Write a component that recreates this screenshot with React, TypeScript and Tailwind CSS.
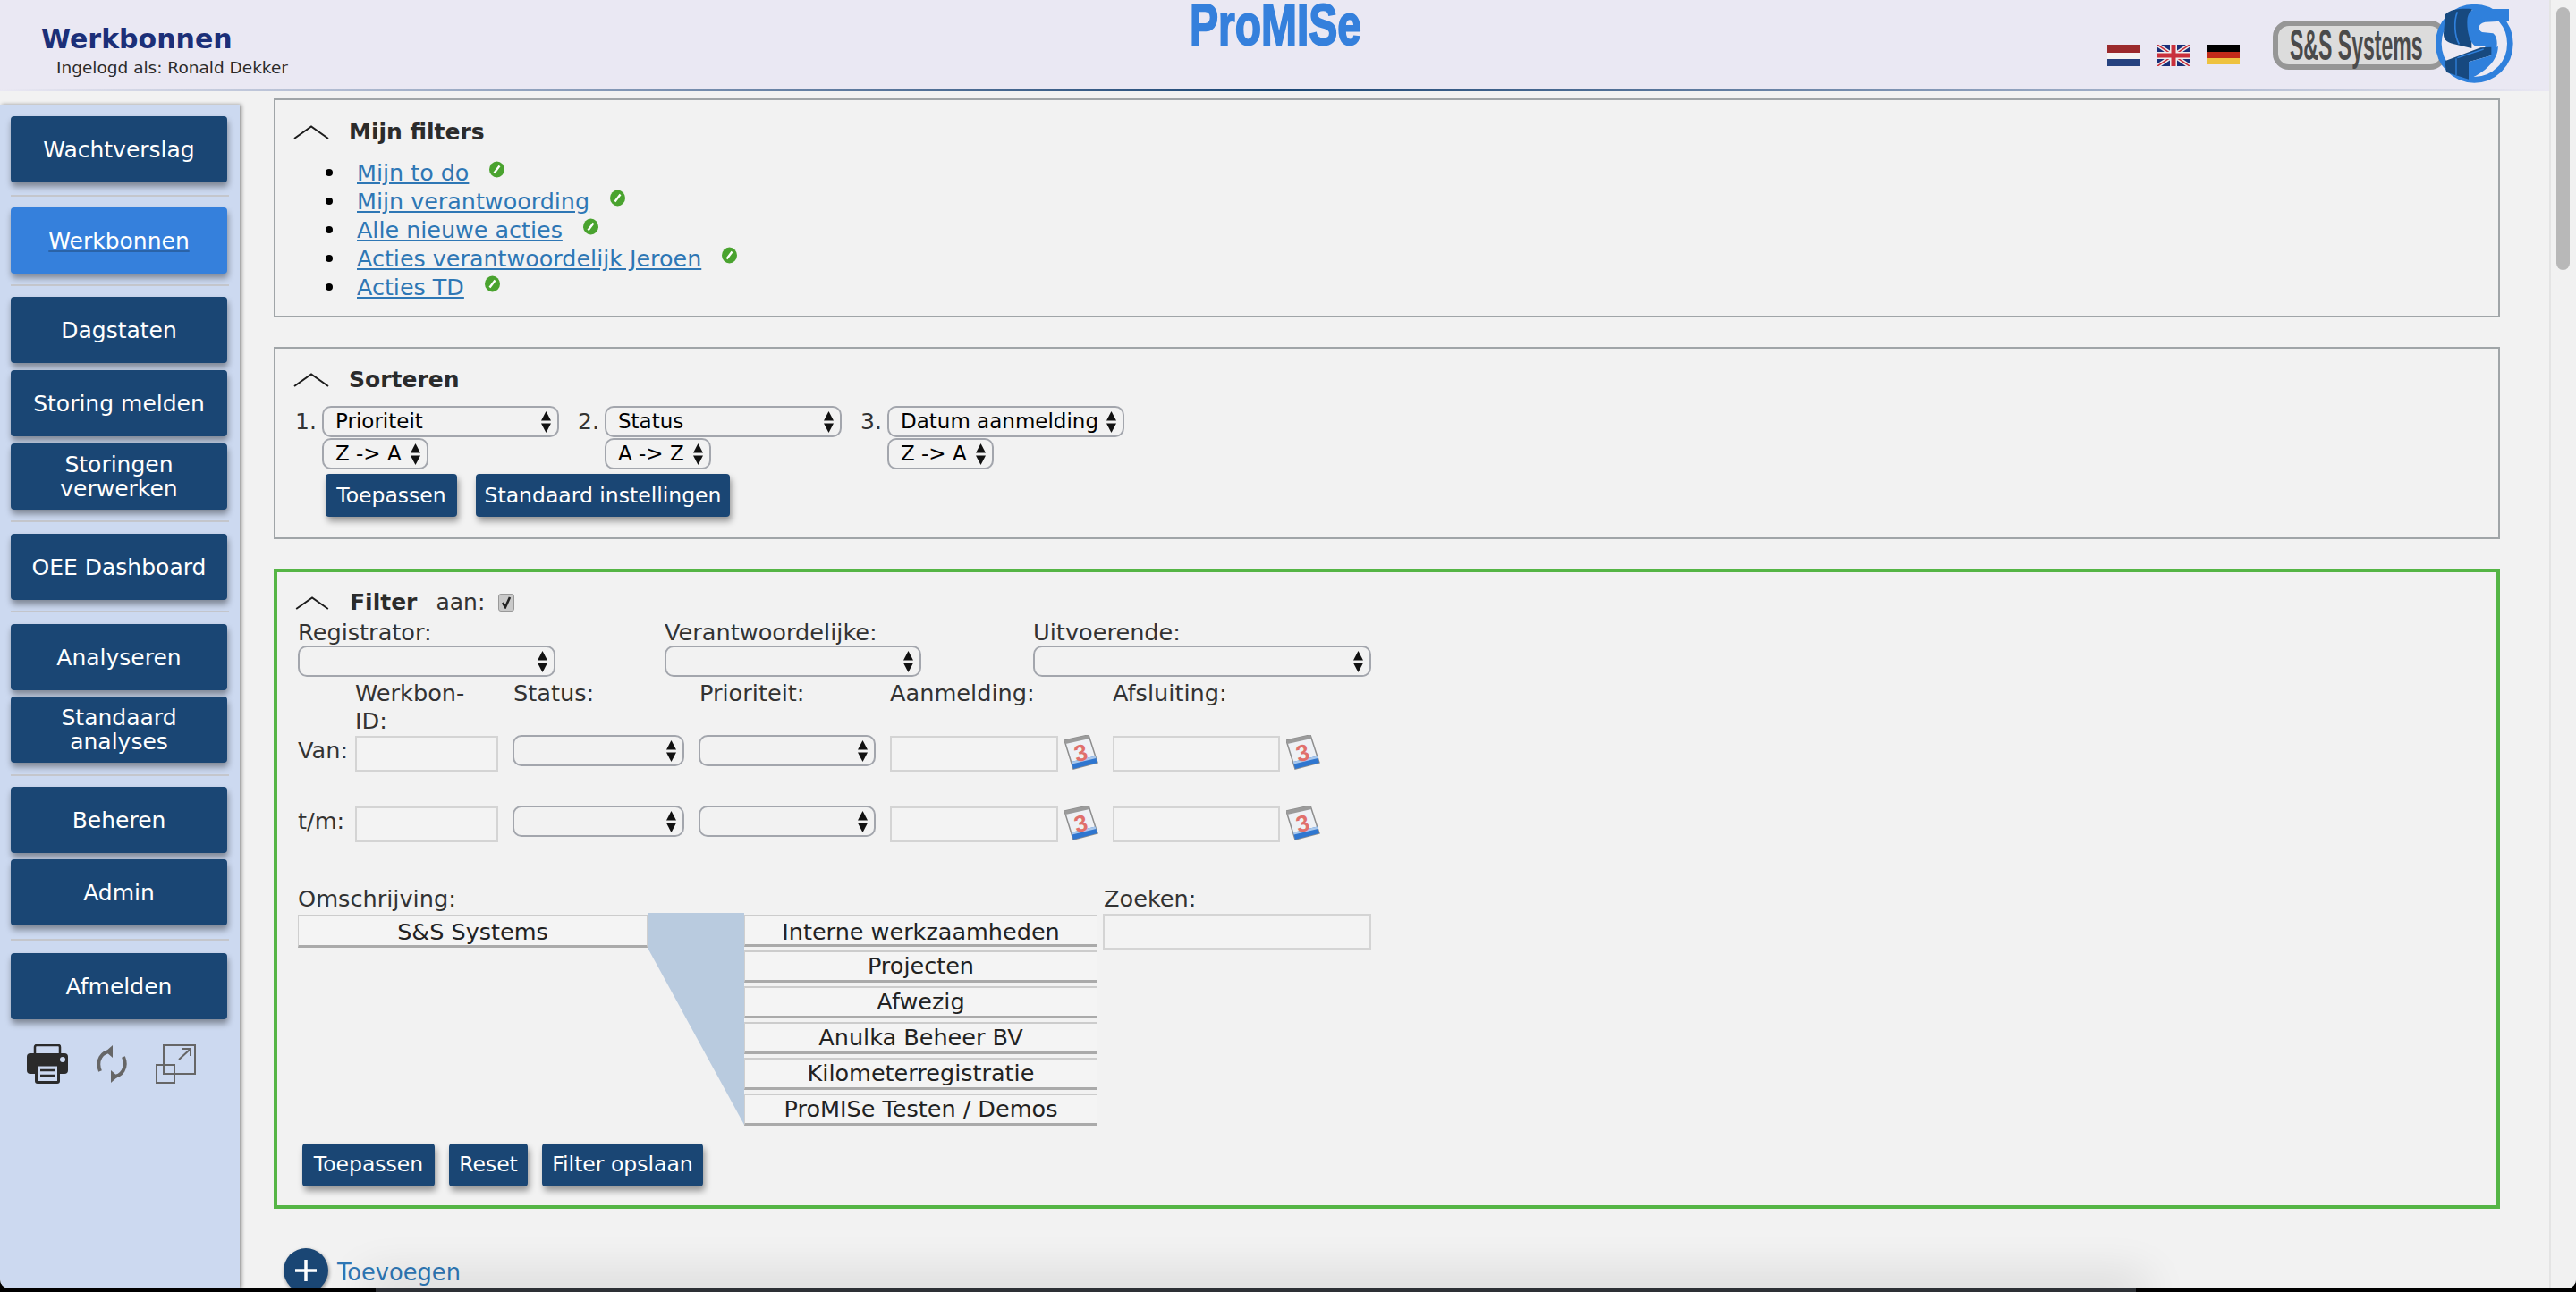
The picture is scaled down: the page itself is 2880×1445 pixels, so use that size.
const font = "font-['DejaVu_Sans',sans-serif]";

const menuGroups = [
  { items: ["Wachtverslag"], gap: "gap-[7px]", after: "mt-[14px] mb-3" },
  { items: ["Werkbonnen"], gap: "gap-[7px]", active: true, after: "mt-3 mb-[12px]" },
  { items: ["Dagstaten", "Storing melden", "Storingen verwerken"], gap: "gap-[8px]", after: "mt-3 mb-[13px]" },
  { items: ["OEE Dashboard"], gap: "gap-[7px]", after: "mt-3 mb-[13px]" },
  { items: ["Analyseren", "Standaard analyses"], gap: "gap-[7px]", after: "mt-[13px] mb-[12px]" },
  { items: ["Beheren", "Admin"], gap: "gap-[7px]", after: "mt-[15px] mb-[14px]" },
  { items: ["Afmelden"], gap: "gap-[7px]", after: "" },
];

const Chevron = ({ small = false }: { small?: boolean }) => (
  <svg viewBox="0 0 40 16" className={small ? "w-[38px] h-[15px]" : "w-[40px] h-[16px]"} fill="none" stroke="#1c1c1c" strokeWidth="2">
    <path d="M1 15 L20 1.5 L39 15" />
  </svg>
);

const Spinner = () => (
  <svg viewBox="0 0 13 24" className="w-[13px] h-[24px] shrink-0" fill="#111">
    <path d="M6.5 0 L12 10.5 H1 Z" />
    <path d="M6.5 24 L12 13.5 H1 Z" />
  </svg>
);

const Select = ({ value = "", className = "" }: { value?: string; className?: string }) => (
  <div className={`flex items-center justify-between h-[35px] shrink-0 border-2 border-[#a3a6ad] rounded-[10px] bg-[#f2f2f2] pl-[13px] pr-[6px] text-[23px] text-black whitespace-nowrap ${className}`}>
    <span>{value}</span>
    <Spinner />
  </div>
);

const Field = ({ className = "" }: { className?: string }) => (
  <div className={`h-[40px] shrink-0 border-2 border-[#d4d4d4] bg-[#f3f3f3] ${className}`} />
);

const Btn = ({ label, className = "" }: { label: string; className?: string }) => (
  <div className={`flex items-center justify-center h-[48px] rounded-[4px] bg-[#1a4674] text-white text-[23.5px] whitespace-nowrap shadow-[2px_5px_7px_rgba(0,0,0,0.38)] ${className}`}>
    {label}
  </div>
);

const Pencil = () => (
  <svg viewBox="0 0 17 18" className="w-[17px] h-[19px] ml-[23px] -translate-y-[4px]">
    <ellipse cx="8.5" cy="9" rx="8.5" ry="9" fill="#4aa32f" />
    <path d="M5.5 13 L11.5 5" stroke="#fff" strokeWidth="2.4" />
  </svg>
);

const Calendar = () => (
  <svg viewBox="0 0 38 40" className="w-[38px] h-[40px] ml-[7px] shrink-0">
    <path d="M0 6 L27 0 L37 31 L10 38 Z" fill="#eef1f5" stroke="#8e8e8e" strokeWidth="1.5" />
    <path d="M7.8 30 L34.6 23.5 L37 31 L10 38 Z" fill="#2f76cf" />
    <path d="M7.8 30 L34.6 23.5 L35.4 26 L8.6 32.5 Z" fill="#a9c8ec" />
    <path d="M0 6 L27 0 L28.2 4 L1.4 10 Z" fill="#9b9b9b" />
    <text x="11" y="29" fontSize="26" fontWeight="700" fill="#e0706c" fontFamily="Liberation Sans" transform="rotate(-14 18 20)">3</text>
  </svg>
);

const Flag = ({ kind }: { kind: "nl" | "uk" | "de" }) => {
  if (kind === "nl")
    return (
      <svg viewBox="0 0 36 24" className="w-[36px] h-[24px]">
        <rect width="36" height="9" fill="#9b2a2c" />
        <rect y="9" width="36" height="7" fill="#f4f4f4" />
        <rect y="16" width="36" height="8" fill="#26427f" />
      </svg>
    );
  if (kind === "uk")
    return (
      <svg viewBox="0 0 36 24" className="w-[36px] h-[24px]">
        <rect width="36" height="24" fill="#1a2f78" />
        <path d="M0 0 L36 24 M36 0 L0 24" stroke="#eee" strokeWidth="4.5" />
        <path d="M0 0 L36 24 M36 0 L0 24" stroke="#c9303c" strokeWidth="1.5" />
        <path d="M18 0 V24 M0 12 H36" stroke="#eee" strokeWidth="8" />
        <path d="M18 0 V24 M0 12 H36" stroke="#c9303c" strokeWidth="5" />
      </svg>
    );
  return (
    <svg viewBox="0 0 36 22" className="w-[36px] h-[22px] self-start">
      <rect width="36" height="8" fill="#000" />
      <rect y="8" width="36" height="7" fill="#c22b19" />
      <rect y="15" width="36" height="7" fill="#eec23f" />
    </svg>
  );
};

const Logo = () => (
  <div className="relative w-[279px] h-[100px] ml-[37px] shrink-0">
    <div className="flex items-center w-[194px] h-[55px] mt-[23px] pl-[13px] border-[6px] border-[#969696] rounded-[18px] bg-[#dcdcdc]">
      <span className="origin-left scale-x-[0.48] text-[48px] font-bold leading-none whitespace-nowrap text-[#4a4a4a] font-['Liberation_Sans',sans-serif]">S&amp;S Systems</span>
    </div>
    <svg viewBox="0 0 330 300" className="absolute left-[169px] top-0 w-[110px] h-[100px]">
      <ellipse cx="169" cy="146" rx="120" ry="122" fill="#eceaf3" stroke="#2f80dc" strokeWidth="20" />
      <path d="M72 48 C90 30 125 28 160 30 L160 162 L110 150 C85 145 64 138 66 112 Z" fill="#17497f" />
      <path d="M112 40 C100 70 102 120 118 148" fill="none" stroke="#2f80dc" strokeWidth="5" />
      <path d="M285 30 L285 70 L205 74 C182 78 178 100 195 108 L232 112 C250 125 250 170 228 186 L205 182 L205 155 L172 155 C150 140 142 90 146 60 C150 40 162 30 178 30 Z" fill="#2f80dc" />
      <path d="M70 205 L190 160 L226 158 L226 186 L150 208 L150 266 L75 242 Z" fill="#17497f" />
      <path d="M108 196 L108 252 M112 194 L200 165" fill="none" stroke="#2f80dc" strokeWidth="4" />
      <path d="M150 208 L226 186 L248 152 C252 190 220 235 150 266 Z" fill="#2f80dc" />
    </svg>
  </div>
);

const Header = () => (
  <div className="flex h-[100px] bg-[#eae8f3]">
    <div className="w-[1330px] pl-[46px] pt-[26px] shrink-0">
      <div className="text-[30px] leading-[36px] font-bold text-[#1c2f78]">Werkbonnen</div>
      <div className="ml-[17px] mt-[2px] text-[18.5px] leading-[24px] text-[#2b2b2b]">Ingelogd als: Ronald Dekker</div>
    </div>
    <div className="w-[1026px] shrink-0">
      <span className="block origin-left scale-x-75 text-[64px] leading-[56px] font-bold whitespace-nowrap text-[#3580dc] font-['Liberation_Sans',sans-serif] [-webkit-text-stroke:2px_#3580dc]">ProMISe</span>
    </div>
    <div className="flex items-start gap-5 pt-[50px] shrink-0">
      <Flag kind="nl" />
      <Flag kind="uk" />
      <Flag kind="de" />
    </div>
    <Logo />
  </div>
);

const Sidebar = () => (
  <div className="w-[268px] shrink-0 mt-[15px] pt-[13px] pl-3 bg-[#ccd9f0] rounded-bl-[10px] shadow-[2px_0_4px_rgba(0,0,0,0.4)]">
    {menuGroups.map((group) => (
      <div key={group.items[0]}>
        <div className={`flex flex-col ${group.gap}`}>
          {group.items.map((item) => (
            <div
              key={item}
              className={`flex items-center justify-center w-[242px] h-[74px] rounded-[4px] text-white text-[25px] leading-[27px] text-center shadow-[1px_5px_7px_rgba(0,0,0,0.38)] ${group.active ? "bg-[#3580dc]" : "bg-[#1a4674]"}`}
            >
              <span className={`max-w-[230px] ${group.active ? "underline decoration-[#2a63a8]" : ""}`}>{item}</span>
            </div>
          ))}
        </div>
        {group.after && <div className={`w-[244px] h-[2px] bg-[#c4c6cc] ${group.after}`} />}
      </div>
    ))}
    <div className="flex items-start mt-[28px] pl-[18px]">
      <svg viewBox="0 0 46 44" className="w-[46px] h-[44px]">
        <path d="M9 10 V3 a2 2 0 0 1 2 -2 H35 a2 2 0 0 1 2 2 V10" fill="none" stroke="#2b2b2b" strokeWidth="2.5" />
        <rect y="10" width="46" height="23" rx="4" fill="#2b2b2b" />
        <circle cx="40" cy="17" r="3" fill="#ccd9f0" />
        <rect x="10.5" y="23" width="25" height="19.5" rx="1.5" fill="#ccd9f0" stroke="#2b2b2b" strokeWidth="3" />
        <path d="M15 29 H31 M15 35 H31" stroke="#2b2b2b" strokeWidth="2.5" />
      </svg>
      <svg viewBox="0 0 34 44" className="w-[34px] h-[44px] ml-[32px]" fill="#666">
        <path d="M4 30 C-1 18 6 8 16 8" fill="none" stroke="#666" strokeWidth="4" />
        <path d="M18 1 L18 15 L10 8 Z" />
        <path d="M30 14 C35 26 28 36 18 36" fill="none" stroke="#666" strokeWidth="4" />
        <path d="M16 29 L16 43 L24 36 Z" />
      </svg>
      <svg viewBox="0 0 46 44" className="w-[46px] h-[44px] ml-[32px]" fill="none" stroke="#666" strokeWidth="2">
        <rect x="9" y="1" width="35" height="32" />
        <rect x="1" y="23" width="20" height="20" />
        <path d="M26 17 L38 6 M30 5 H39 V13" />
      </svg>
    </div>
  </div>
);

const links = ["Mijn to do", "Mijn verantwoording", "Alle nieuwe acties", "Acties verantwoordelijk Jeroen", "Acties TD"];

const MijnFilters = () => (
  <div className="h-[245px] border-2 border-[#a0a5a8] pt-[21px] pl-5">
    <div className="flex items-center h-[30px]">
      <Chevron />
      <span className="ml-[22px] text-[25px] font-bold text-[#2b2b2b]">Mijn filters</span>
    </div>
    <div className="mt-[14px] flex flex-col">
      {links.map((link) => (
        <div key={link} className="flex items-center h-[32px] pl-[36px]">
          <span className="w-2 h-2 rounded-full bg-black" />
          <span className="ml-[27px] text-[25.4px] leading-[32px] text-[#2e77b5] underline">{link}</span>
          <Pencil />
        </div>
      ))}
    </div>
  </div>
);

const sortCols = [
  { n: "1.", field: "Prioriteit", order: "Z -> A", w: "w-[316px]" },
  { n: "2.", field: "Status", order: "A -> Z", w: "w-[316px]" },
  { n: "3.", field: "Datum aanmelding", order: "Z -> A", w: "w-[296px]" },
];

const Sorteren = () => (
  <div className="h-[215px] mt-[33px] border-2 border-[#a0a5a8] pt-5 pl-5">
    <div className="flex items-center h-[30px]">
      <Chevron />
      <span className="ml-[22px] text-[25px] font-bold text-[#2b2b2b]">Sorteren</span>
    </div>
    <div className="flex mt-[14px] ml-[2px]">
      {sortCols.map((col) => (
        <div key={col.n} className={`flex ${col.w}`}>
          <span className="w-[30px] text-[25px] leading-[35px] text-[#333]">{col.n}</span>
          <div className="flex flex-col gap-[1px]">
            <Select value={col.field} className="w-[265px]" />
            <Select value={col.order} className="w-[119px]" />
          </div>
        </div>
      ))}
    </div>
    <div className="flex gap-[21px] mt-[5px] ml-[36px]">
      <Btn label="Toepassen" className="w-[147px] pt-[2px]" />
      <Btn label="Standaard instellingen" className="w-[284px] pt-[2px]" />
    </div>
  </div>
);

const FilterRow = ({ label, className = "" }: { label: string; className?: string }) => (
  <div className={`flex items-start ${className}`}>
    <span className="w-[64px] shrink-0 leading-[34px] text-[#333]">{label}</span>
    <Field className="w-[160px] mt-[1px]" />
    <Select className="w-[192px] ml-4" />
    <Select className="w-[198px] ml-4" />
    <Field className="w-[188px] ml-4 mt-[1px]" />
    <Calendar />
    <Field className="w-[187px] ml-4 mt-[1px]" />
    <Calendar />
  </div>
);

const Cell = ({ label, className = "" }: { label: string; className?: string }) => (
  <div className={`flex items-center justify-center bg-[#f4f4f4] border-x border-[#cfcfcf] border-t-2 border-t-[#cccccc] border-b-[3px] border-b-[#aaaaaa] text-[25.5px] text-[#222] ${className}`}>
    {label}
  </div>
);

const subItems = ["Interne werkzaamheden", "Projecten", "Afwezig", "Anulka Beheer BV", "Kilometerregistratie", "ProMISe Testen / Demos"];

const Filter = () => (
  <div className="h-[716px] mt-[33px] border-4 border-[#55b545] pt-6 pl-[23px] text-[25.6px] text-[#333]">
    <div className="flex items-center h-[20px] -ml-[3px] text-[25px]">
      <Chevron small />
      <span className="ml-[23px] font-bold text-[#2b2b2b]">Filter</span>
      <span className="ml-[21px]">aan:</span>
      <div className="flex items-center justify-center w-[18px] h-[20px] ml-[15px] rounded-[3px] bg-[#c9c9c9] border border-[#999]">
        <svg viewBox="0 0 12 14" className="w-[12px] h-[14px]" fill="none" stroke="#222" strokeWidth="2.6">
          <path d="M2 7 L5 12 L10 1" />
        </svg>
      </div>
    </div>

    <div className="flex pt-2 leading-[30px]">
      <span className="w-[410px]">Registrator:</span>
      <span className="w-[412px]">Verantwoordelijke:</span>
      <span>Uitvoerende:</span>
    </div>
    <div className="flex">
      <Select className="w-[288px] mr-[122px]" />
      <Select className="w-[287px] mr-[125px]" />
      <Select className="w-[378px]" />
    </div>

    <div className="flex mt-[3px] leading-[31px] pl-[64px]">
      <span className="w-[177px]">
        Werkbon-
        <br />
        ID:
      </span>
      <span className="w-[208px]">Status:</span>
      <span className="w-[213px]">Prioriteit:</span>
      <span className="w-[249px]">Aanmelding:</span>
      <span>Afsluiting:</span>
    </div>

    <FilterRow label="Van:" />
    <FilterRow label="t/m:" className="mt-[38px]" />

    <div className="flex mt-[48px] mb-[1px] leading-[30px]">
      <span className="w-[901px]">Omschrijving:</span>
      <span>Zoeken:</span>
    </div>
    <div className="flex h-[237px]">
      <Cell label="S&S Systems" className="w-[391px] h-[37px] mt-[2px] pt-[3px]" />
      <svg viewBox="0 0 108 237" className="w-[108px] h-[237px] shrink-0">
        <path d="M0 0 H108 V237 L0 39 Z" fill="#b9cbdf" />
      </svg>
      <div className="flex flex-col gap-1 w-[395px] mt-[2px]">
        {subItems.map((item) => (
          <Cell key={item} label={item} className={item === subItems[0] ? "h-[36px] pt-[3px]" : "h-[36px]"} />
        ))}
      </div>
      <Field className="w-[300px] h-[38px] ml-[6px] mt-[1px]" />
    </div>

    <div className="flex gap-4 mt-[21px] ml-[5px]">
      <Btn label="Toepassen" className="w-[148px]" />
      <Btn label="Reset" className="w-[88px]" />
      <Btn label="Filter opslaan" className="w-[180px]" />
    </div>
  </div>
);

const App = () => {
  return (
    <div className={`relative w-[2880px] h-[1445px] overflow-hidden bg-black ${font}`}>
      <div className="flex h-[1441px] overflow-hidden rounded-b-[10px] bg-[#f2f2f2]">
        <div className="flex flex-col w-[2850px] shrink-0">
          <Header />
          <div className="h-[2px] bg-gradient-to-r from-[#eae8f3] via-[#1a4674] to-[#eae8f3]" />
          <div className="flex flex-1 min-h-0">
            <Sidebar />
            <div className="w-[2489px] ml-[38px] pt-2">
              <MijnFilters />
              <Sorteren />
              <Filter />
              <div className="flex items-center mt-[44px] ml-[11px]">
                <div className="flex items-center justify-center w-[50px] h-[50px] rounded-full bg-[#1a4674] shadow-[1px_2px_4px_rgba(0,0,0,0.4)]">
                  <svg viewBox="0 0 26 26" className="w-[26px] h-[26px]" stroke="#fff" strokeWidth="3.5">
                    <path d="M13 1 V25 M1 13 H25" />
                  </svg>
                </div>
                <span className="ml-[10px] pt-[4px] text-[25.7px] text-[#2e77b5]">Toevoegen</span>
              </div>
            </div>
          </div>
        </div>
        <div className="w-[30px] border-l-2 border-[#e4e4e4] bg-[#f1f1f1] pt-2 pl-[6px]">
          <div className="w-[15px] h-[294px] rounded-full bg-[#b8b8b8]" />
        </div>
      </div>
      <div className="absolute bottom-0 left-[420px] w-[1968px] h-[4px] bg-[#2d3035] shadow-[0_0_50px_12px_rgba(0,0,0,0.14)]" />
    </div>
  );
};

export default App;
